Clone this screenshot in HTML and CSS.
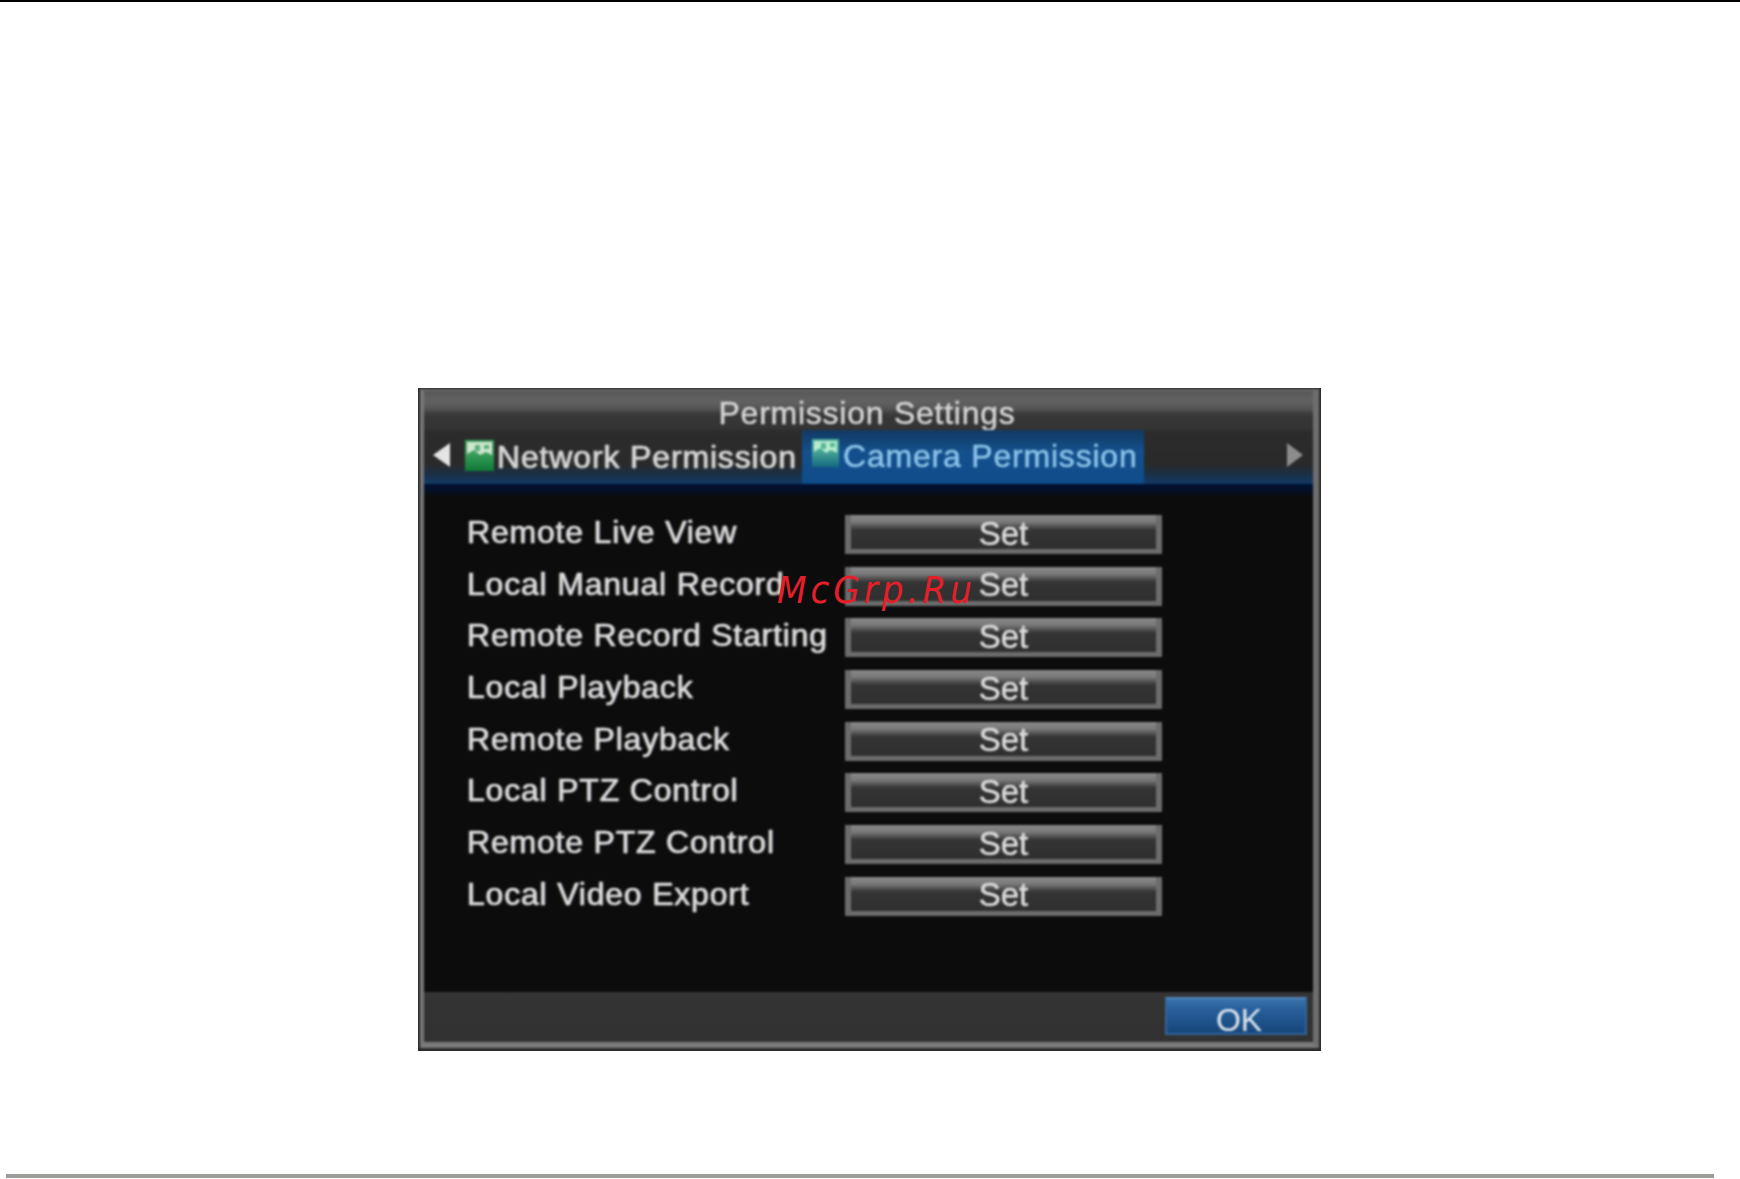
FILE: index.html
```html
<!DOCTYPE html>
<html lang="en">
<head>
<meta charset="utf-8">
<title>Permission Settings</title>
<link rel="stylesheet" href="styles.css">
</head>
<body>
<div class="page">
  <div class="top-rule"></div>
  <main class="frame">
    <div class="screen">
      <header class="header">
        <h1 class="title">Permission Settings</h1>
        <nav class="tabs">
          <svg class="arrow" width="17" height="24" viewBox="0 0 17 24"><path d="M17 0V24L0 12Z" fill="#e4e4e4"/></svg>
          <div class="tab">
            <svg class="tab-icon" width="29" height="31" viewBox="0 0 29 31"><rect width="29" height="31" fill="url(#gn)"/><path d="M2 2H27V15L21 12 15 15 9 10 2 14Z" fill="#cfe6cf"/><path d="M10 5H15V11H10ZM19 5H24V9H19Z" fill="#5cae7a"/><defs><linearGradient id="gn" x1="0" y1="0" x2="0" y2="1"><stop offset="0.4" stop-color="#3ea060"/><stop offset="1" stop-color="#0e7a34"/></linearGradient></defs></svg>
            <span>Network Permission</span>
          </div>
          <div class="tab tab-active">
            <svg class="tab-icon" width="27" height="28" viewBox="0 0 27 28"><rect width="27" height="28" fill="url(#gc)"/><path d="M2 2H25V14L19 11 14 14 8 9 2 13Z" fill="#b8ecd0"/><path d="M9 4H14V10H9ZM18 4H23V8H18Z" fill="#56b898"/><defs><linearGradient id="gc" x1="0" y1="0" x2="0" y2="1"><stop offset="0.4" stop-color="#4aaa98"/><stop offset="1" stop-color="#146a80"/></linearGradient></defs></svg>
            <span>Camera Permission</span>
          </div>
          <svg class="arrow arrow-next" width="16" height="24" viewBox="0 0 16 24"><path d="M0 0V24L16 12Z" fill="#8c8c8c"/></svg>
        </nav>
      </header>
      <section class="rows">
        <div class="row"><span class="label">Remote Live View</span><button class="set">Set</button></div>
        <div class="row"><span class="label">Local Manual Record</span><button class="set">Set</button></div>
        <div class="row"><span class="label">Remote Record Starting</span><button class="set">Set</button></div>
        <div class="row"><span class="label">Local Playback</span><button class="set">Set</button></div>
        <div class="row"><span class="label">Remote Playback</span><button class="set">Set</button></div>
        <div class="row"><span class="label">Local PTZ Control</span><button class="set">Set</button></div>
        <div class="row"><span class="label">Remote PTZ Control</span><button class="set">Set</button></div>
        <div class="row"><span class="label">Local Video Export</span><button class="set">Set</button></div>
      </section>
      <footer class="footer"><button class="ok">OK</button></footer>
    </div>
  </main>
  <div class="bottom-rule"></div>
  <div class="watermark">McGrp.Ru</div>
</div>
</body>
</html>
```
FILE: styles.css
```css
* { box-sizing: border-box; }
html, body { margin: 0; padding: 0; background: #fff; }
.page {
  position: relative;
  width: 1740px;
  height: 1179px;
  overflow: hidden;
  display: flex;
  flex-direction: column;
  font-family: "Liberation Sans", Arial, sans-serif;
}
.top-rule { height: 2px; background: #000; flex: none; }
.frame {
  flex: none;
  width: 903px;
  height: 663px;
  margin: 386px 0 0 418px;
  background: #2a2a2a;
  padding: 1px 2px 3px 2px;
  overflow: hidden;
}
.screen {
  height: 100%;
  display: flex;
  flex-direction: column;
  background: #0c0c0c;
  border-style: solid;
  border-color: #686868 #6e6e6e #7a7a7a #777;
  border-width: 2px 6px 6px 4px;
  filter: blur(1.1px);
}
.header {
  flex: none;
  height: 93px;
  background: linear-gradient(#585858 0, #626262 10px, #565656 17px, #383838 24px, #2c2c2c 60px, #2a2a2a 80px);
}
.title {
  margin: 0;
  height: 39px;
  line-height: 44px;
  text-align: center;
  font-size: 32px;
  font-weight: normal;
  letter-spacing: 0.75px;
  color: #d4d4d4;
  -webkit-text-stroke: 0.5px #d4d4d4;
  padding-right: 3px;
}
.tabs {
  height: 54px;
  display: flex;
  align-items: stretch;
  padding-left: 9px;
  background: linear-gradient(#2c2c2c 0, #2a2a2a 34px, #1a3046 44px, #123a64 54px);
  position: relative;
}
.arrow { flex: none; align-self: center; margin-bottom: 4px; }
.tab {
  display: flex;
  align-items: center;
  font-size: 32px;
  color: #d8d8d8;
  -webkit-text-stroke: 0.5px #d8d8d8;
  letter-spacing: 0.85px;
  text-shadow: 1px 0 1px rgba(190, 160, 210, .35), -1px 0 1px rgba(170, 210, 170, .35);
}
.tab:nth-of-type(1) { width: 352px; padding-left: 15px; }
.tab span { margin-left: 3px; }
.tab-icon { flex: none; margin-top: -4px; }
.tab-active {
  width: 342px;
  padding-left: 10px;
  color: #8cc4ea;
  -webkit-text-stroke: 0.5px #8cc4ea;
  letter-spacing: 0.8px;
  text-shadow: none;
  background: linear-gradient(#123a62, #14508c 40%, #0f4c8a);
}
.tab-active .tab-icon { margin-top: -8px; }
.tab-active span { margin-left: 4px; padding-bottom: 2px; }
.arrow-next { margin-left: auto; margin-right: 10px; }
.rows {
  flex: none;
  display: grid;
  grid-auto-rows: 39px;
  row-gap: 12.7px;
  padding: 31px 0 0 43px;
  background: linear-gradient(#021030 0, #02102c 5px, #0c0c0c 13px);
}
.row {
  display: grid;
  grid-template-columns: 378px 317px;
  grid-template-rows: 39px;
  align-items: center;
}
.label {
  font-size: 32px;
  line-height: 32px;
  letter-spacing: 0.8px;
  color: #dcdcdc;
  -webkit-text-stroke: 0.5px #dcdcdc;
  white-space: nowrap;
  padding-bottom: 5px;
  text-shadow: 1px 0 1px rgba(170, 170, 240, .35), -1px 0 1px rgba(190, 210, 150, .35);
}
.set {
  height: 39px;
  padding: 3px 0 0;
  font: 33px/28px "Liberation Sans", Arial, sans-serif;
  color: #dcdcdc;
  -webkit-text-stroke: 0.5px #dcdcdc;
  border: solid #6c6c6c;
  border-width: 0 6px 5px;
  background: linear-gradient(#888 0, #7a7a7a 7px, #565656 11px, #343434 15px, #2e2e2e 100%) border-box;
}
.footer {
  flex: none;
  margin-top: auto;
  height: 50px;
  display: flex;
  justify-content: flex-end;
  align-items: flex-start;
  padding: 5px 6px 0 0;
  background: linear-gradient(#343434, #323232);
}
.ok {
  width: 142px;
  height: 38px;
  padding: 3px 0 0 6px;
  font: 32px "Liberation Sans", Arial, sans-serif;
  color: #dfe8f0;
  border: 2px solid #33659c;
  border-top-color: #4f86bc;
  background: linear-gradient(#3a74ac 0, #275f9c 30%, #164678 100%);
}
.bottom-rule {
  flex: none;
  width: 1708px;
  height: 4px;
  margin: 123px 0 0 6px;
  background: #9c9c98;
}
.watermark {
  position: absolute;
  left: 777px;
  top: 565px;
  font-family: "DejaVu Sans Condensed", "DejaVu Sans", sans-serif;
  font-style: italic;
  font-size: 38px;
  letter-spacing: 4px;
  color: #e3202a;
  line-height: 50px;
}
```
